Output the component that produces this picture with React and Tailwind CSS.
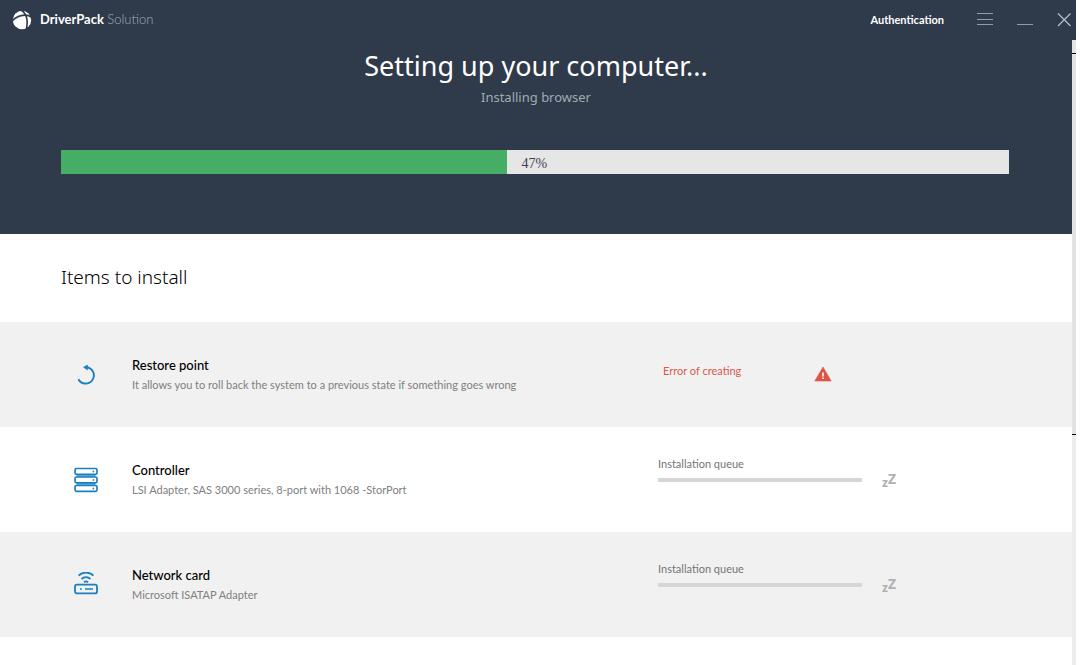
function Logo() {
  return (
    <svg viewBox="0 0 20 20" className="h-5 w-5" aria-hidden="true">
      <circle cx="10" cy="10" r="9.2" fill="#fff" />
      <g fill="none" stroke="#2f3a4a">
        <path d="M0 11C3.6 7.4 8 5.4 12.6 5.2C15.4 5.1 17.6 5.8 19.6 7" strokeWidth="1.7" />
        <path d="M8.6 0C11.8 1.6 14 4.6 14.8 8.6C15.4 12 15.2 15.4 14.4 19" strokeWidth="1.6" />
      </g>
    </svg>
  );
}

function RestoreIcon() {
  return (
    <svg viewBox="0 0 24 24" className="h-6 w-6" fill="none" aria-hidden="true">
      <path d="M12.6 4.2A8.2 8.2 0 1 1 4.4 16.2" stroke="#1b80c0" strokeWidth="1.9" />
      <path d="M9.6 4.2L13.4 2.2V6.8Z" fill="#1b80c0" stroke="#1b80c0" strokeWidth="0.8" strokeLinejoin="round" />
    </svg>
  );
}

function ControllerIcon() {
  return (
    <svg viewBox="0 0 24 26" className="h-[26px] w-6" fill="none" aria-hidden="true">
      <path d="M2.5 7.2h19v3h-19zM2.5 15.4h19v3h-19z" fill="#6fb0da" />
      <g fill="#fff" stroke="#1b80c0" strokeWidth="1.7">
        <rect x="1" y="1.5" width="22" height="5.8" rx="1.5" />
        <rect x="1" y="10" width="22" height="5.8" rx="1.5" />
        <rect x="1" y="18.5" width="22" height="5.8" rx="1.5" />
      </g>
      <path d="M18.6 4.4h1.6M18.6 12.9h1.6M18.6 21.4h1.6" stroke="#1b80c0" strokeWidth="1.5" />
    </svg>
  );
}

function NetworkIcon() {
  return (
    <svg viewBox="0 0 24 26" className="h-[26px] w-6" fill="none" stroke="#1b80c0" strokeWidth="1.8" aria-hidden="true">
      <rect x="1" y="12.6" width="22" height="8.8" rx="2" />
      <path d="M6 17h1.8M11 17h8" strokeWidth="1.6" />
      <path d="M4.6 3.6C8.6 -0.4 15.4 -0.4 19.4 3.6M7.6 7C10 4.6 14 4.6 16.4 7M10 10.2C11.2 9.2 12.8 9.2 14 10.2" />
    </svg>
  );
}

function WarningIcon() {
  return (
    <svg viewBox="0 0 18 16" className="h-4 w-[18px]" role="img" aria-label="Error">
      <path d="M9 1L17.2 15H0.8Z" fill="#dc5648" stroke="#dc5648" strokeWidth="0.6" strokeLinejoin="round" />
      <path d="M9 6.4v4M9 11.4v1.6" stroke="#f6dcd8" strokeWidth="2" />
    </svg>
  );
}

function QueueStatus() {
  return (
    <div className="mt-[29px]">
      <p className="text-[11px] leading-4 text-[#757575]">Installation queue</p>
      <div className="flex items-start gap-5">
        <div className="mt-[6px] h-1 w-[204px] bg-[#d6d6d6]" />
        <span className="flex items-start font-['Noto_Sans',sans-serif] font-bold text-[#b0b0b0]">
          <span className="pt-1 text-xs leading-[14px]">z</span>
          <span className="text-sm leading-[14px]">Z</span>
        </span>
      </div>
    </div>
  );
}

function ErrorStatus() {
  return (
    <div className="mt-10 flex items-start gap-[70px] pl-[5px]">
      <p className="w-[81px] text-[11px] leading-[18px] whitespace-nowrap text-[#d85a4c]">Error of creating</p>
      <div className="mt-1">
        <WarningIcon />
      </div>
    </div>
  );
}

const items = [
  {
    name: "Restore point",
    detail: "It allows you to roll back the system to a previous state if something goes wrong",
    Icon: RestoreIcon,
    Status: ErrorStatus,
  },
  {
    name: "Controller",
    detail: "LSI Adapter, SAS 3000 series, 8-port with 1068 -StorPort",
    Icon: ControllerIcon,
    Status: QueueStatus,
  },
  {
    name: "Network card",
    detail: "Microsoft ISATAP Adapter",
    Icon: NetworkIcon,
    Status: QueueStatus,
  },
];

function TitleBar() {
  return (
    <header className="flex h-10 items-center justify-between bg-[#2f3a4a] pr-1 pl-3 font-['Lato','Open_Sans',sans-serif]">
      <div className="flex items-center gap-2 text-[13px] text-white">
        <Logo />
        <span>
          <span className="font-bold">DriverPack</span> <span className="font-light text-[#a3adb9]">Solution</span>
        </span>
      </div>
      <div className="flex items-center text-[#8f9cab]">
        <button type="button" className="mr-8 text-[11px] font-bold text-white">
          Authentication
        </button>
        <button type="button" aria-label="Menu" className="mr-[22px]">
          <svg viewBox="0 0 18 16" className="h-4 w-[18px]" stroke="currentColor" strokeWidth="1">
            <path d="M1 1.5h16M1 7.5h16M1 12.5h16" />
          </svg>
        </button>
        <button type="button" aria-label="Minimize" className="mr-[22px]">
          <svg viewBox="0 0 18 16" className="h-4 w-[18px]" stroke="currentColor" strokeWidth="1">
            <path d="M1 12.5h16" />
          </svg>
        </button>
        <button type="button" aria-label="Close">
          <svg viewBox="0 0 16 16" className="h-4 w-4" stroke="#b4bdc8" strokeWidth="1.3">
            <path d="M2 1.5l12.5 12.5M14.5 1.5l-12.5 12.5" />
          </svg>
        </button>
      </div>
    </header>
  );
}

export default function App() {
  const percent = 47;
  return (
    <div className="h-screen overflow-hidden bg-white pr-1 font-['Noto_Sans','Open_Sans',sans-serif]">
      <div className="flex h-full flex-col">
        <TitleBar />
        <div className="flex min-h-0 flex-1">
          <main className="min-w-0 flex-1 overflow-hidden">
            <section className="h-[194px] bg-[#2f3a4a] px-[61px] pt-[6px] text-center">
              <h1 className="text-[27px] leading-10 text-white">Setting up your computer...</h1>
              <p className="text-[13px] leading-[22px] text-[#a0aab6]">Installing browser</p>
              <div
                role="progressbar"
                aria-label="Installation progress"
                aria-valuenow={percent}
                aria-valuemin={0}
                aria-valuemax={100}
                className="mt-[42px] mr-0.5 flex h-6 items-center bg-[#e6e6e6]"
              >
                <div className="h-full bg-[#46ae64]" style={{ width: `${percent}%` }} />
                <span className="pt-1 pl-[15px] font-['Liberation_Serif',serif] text-sm leading-5 text-[#3a4350]">
                  {percent}%
                </span>
              </div>
            </section>
            <h2 className="flex h-[88px] items-center px-[61px] pb-0.5 text-[19px] font-light text-black">
              Items to install
            </h2>
            <ul className="font-['Lato','Open_Sans',sans-serif]">
              {items.map(({ name, detail, Icon, Status }) => (
                <li
                  key={name}
                  className="grid h-[105px] grid-cols-[49px_minmax(0,1fr)_353px] gap-x-[22px] px-[61px] odd:bg-[#f1f1f1]"
                >
                  <div className="flex items-center justify-center">
                    <Icon />
                  </div>
                  <div className="pt-[34px]">
                    <h3 className="text-[13px] leading-[18px] font-medium text-black">{name}</h3>
                    <p className="pt-0.5 text-[11px] leading-[18px] text-[#808080]">{detail}</p>
                  </div>
                  <Status />
                </li>
              ))}
            </ul>
          </main>
          <div className="flex w-1 flex-col bg-[#ececec]" aria-hidden="true">
            <div className="h-[14px] border-b border-black bg-[#e4e4e4]" />
            <div className="mt-px h-[380px] border-b border-black bg-[#e2e2e2]" />
          </div>
        </div>
      </div>
    </div>
  );
}
